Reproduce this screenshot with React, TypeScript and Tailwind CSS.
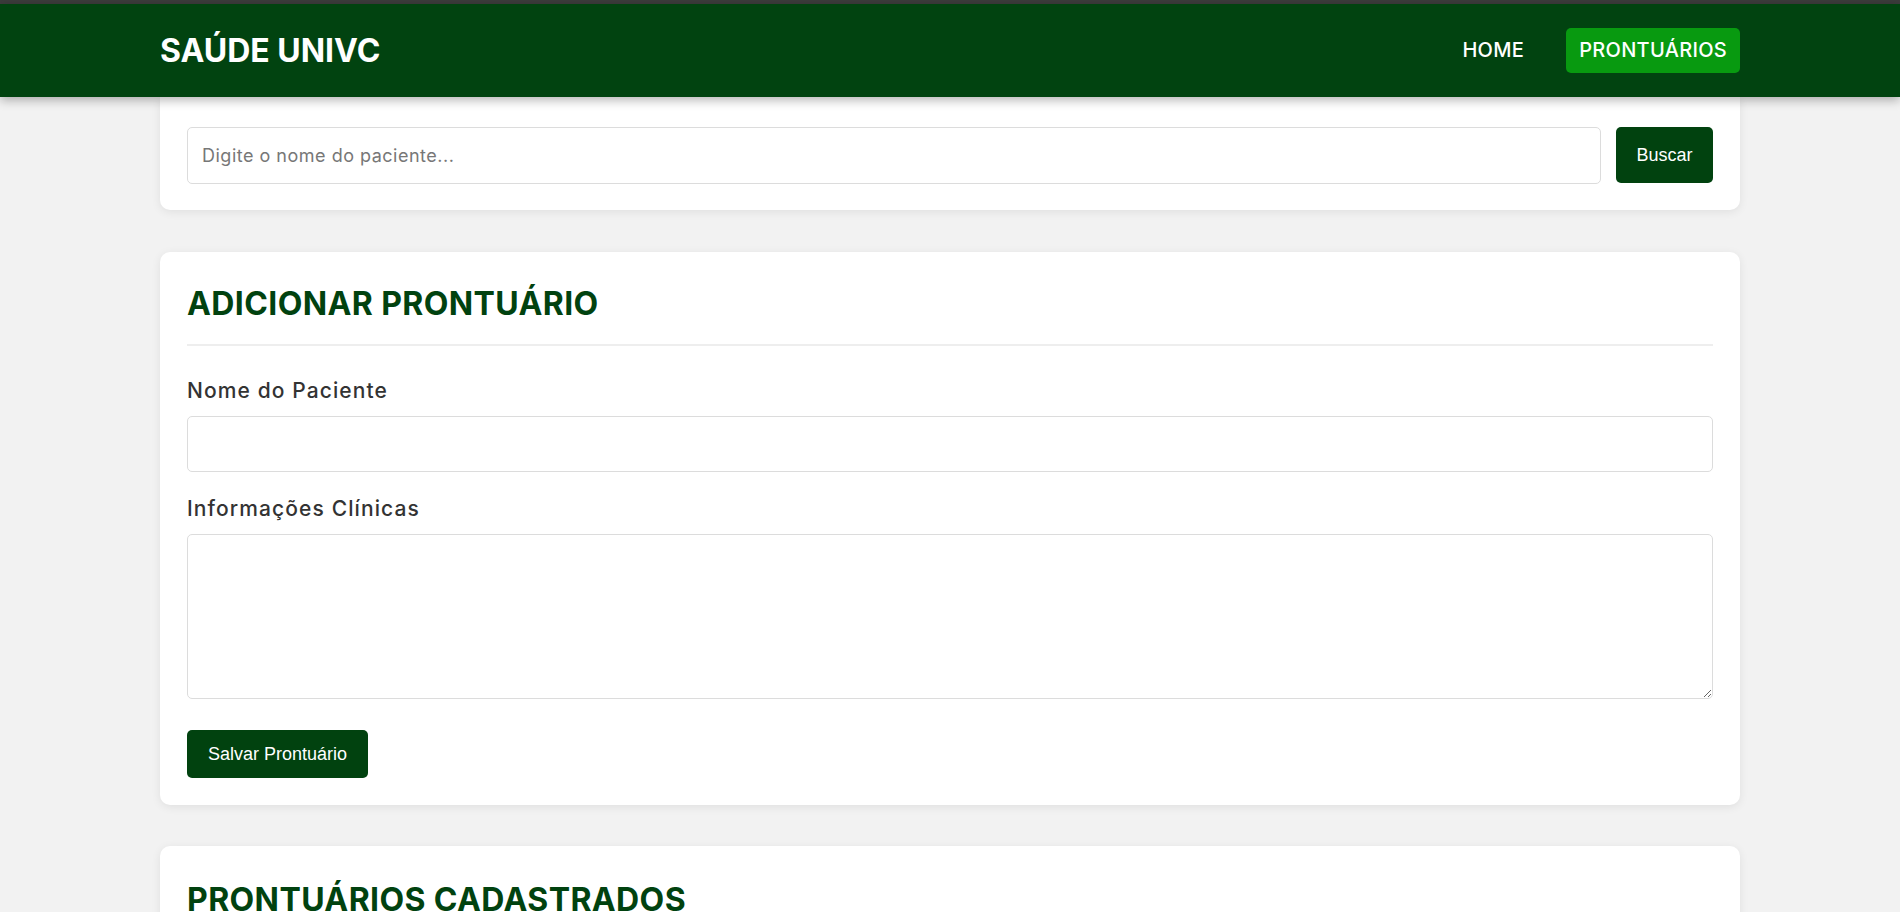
export default function App() {
  return (
    <div className="min-h-screen bg-[#f2f2f2] font-['Inter','Noto_Sans',sans-serif]">
      <div className="h-[4px] bg-[#3c3c3c]" />
      <header className="relative z-10 h-[93px] bg-[#014310] shadow-[0_3px_10px_rgba(0,0,0,0.3)]">
        <div className="mx-auto flex h-full w-[1580px] items-center justify-between">
          <h1 className="text-[32px] font-bold leading-none text-white">SAÚDE UNIVC</h1>
          <nav className="flex items-center gap-[29px]">
            <a className="px-[13px] py-[7px] text-[20px] font-medium leading-[31px] tracking-[0.3px] text-white">HOME</a>
            <a className="rounded-[5px] bg-[#089a10] px-[13px] py-[7px] text-[20px] font-medium leading-[31px] tracking-[0.3px] text-white">
              PRONTUÁRIOS
            </a>
          </nav>
        </div>
      </header>
      <main className="mx-auto w-[1580px] pb-[40px]">
        <section className="rounded-b-[10px] bg-white px-[27px] pb-[26px] pt-[30px] shadow-[0_2px_10px_rgba(0,0,0,0.08)]">
          <div className="flex items-start gap-[15px]">
            <input
              placeholder="Digite o nome do paciente..."
              className="h-[57px] flex-1 rounded-[5px] border border-[#dcdcdc] px-[14px] text-[18px] tracking-[0.5px] text-[#333] outline-none placeholder:text-[#777]"
            />
            <button className="h-[56px] w-[97px] rounded-[5px] bg-[#01420f] font-['Liberation_Sans',Arial,sans-serif] text-[18px] text-white">
              Buscar
            </button>
          </div>
        </section>

        <section className="mt-[42px] rounded-[10px] bg-white px-[27px] pb-[27px] pt-[28px] shadow-[0_2px_10px_rgba(0,0,0,0.08)]">
          <h2 className="border-b-2 border-[#eeeeee] pb-[16px] text-[32px] font-bold leading-[48px] tracking-[0.4px] text-[#01420f]">
            ADICIONAR PRONTUÁRIO
          </h2>
          <div className="mt-[30px] flex flex-col">
            <label className="text-[21px] font-medium leading-[30px] tracking-[1.1px] text-[#333]">Nome do Paciente</label>
            <input className="mt-[10px] h-[56px] w-full rounded-[5px] border border-[#dcdcdc] px-[14px] text-[18px] outline-none" />
            <label className="mt-[22px] text-[21px] font-medium leading-[30px] tracking-[1.1px] text-[#333]">
              Informações Clínicas
            </label>
            <textarea className="mt-[10px] h-[165px] w-full rounded-[5px] border border-[#dcdcdc] px-[14px] py-[14px] text-[18px] outline-none" />
          </div>
          <button className="mt-[31px] h-[48px] w-[181px] rounded-[5px] bg-[#01420f] font-['Liberation_Sans',Arial,sans-serif] text-[18px] text-white">
            Salvar Prontuário
          </button>
        </section>

        <section className="mt-[41px] rounded-[10px] bg-white px-[27px] pb-[27px] pt-[30px] shadow-[0_2px_10px_rgba(0,0,0,0.08)]">
          <h2 className="border-b-2 border-[#eeeeee] pb-[16px] text-[32px] font-bold leading-[48px] tracking-[0.4px] text-[#01420f]">
            PRONTUÁRIOS CADASTRADOS
          </h2>
          <div className="h-[200px]" />
        </section>
      </main>
    </div>
  );
}
